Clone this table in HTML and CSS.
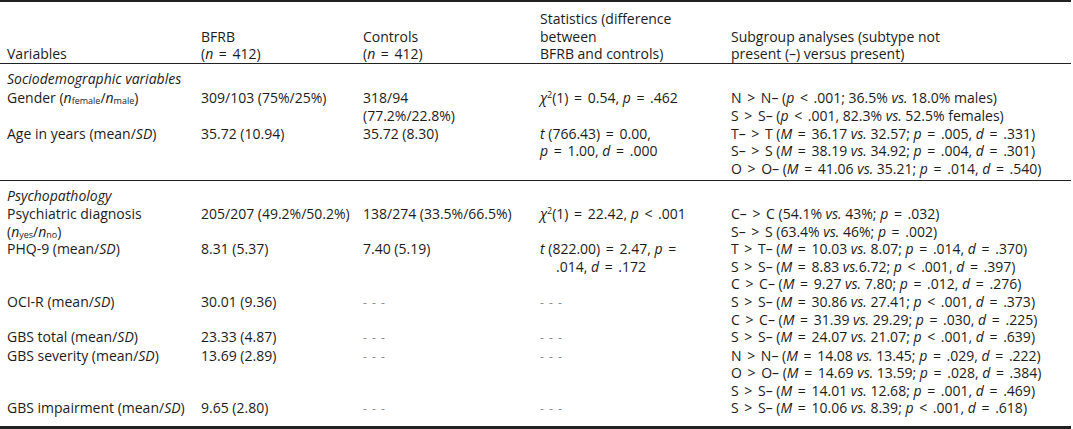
FILE: index.html
```html
<!DOCTYPE html>
<html lang="en">
<head>
<meta charset="utf-8">
<title>BFRB table</title>
<link rel="stylesheet" href="styles.css">
</head>
<body>
<div class="tbl">
  <div class="row head">
    <div class="cell">Variables</div>
    <div class="cell">BFRB<br>(<i>n</i> <span class="op">=</span> 412)</div>
    <div class="cell">Controls<br>(<i>n</i> <span class="op">=</span> 412)</div>
    <div class="cell">Statistics (difference<br>between<br>BFRB and controls)</div>
    <div class="cell">Subgroup analyses (subtype not<br>present (–) versus present)</div>
  </div>

  <div class="sec sec-a">
    <div class="sechead"><i>Sociodemographic variables</i></div>
    <div class="row first">
      <div class="cell">Gender (<i>n</i><sub>female</sub>/<i>n</i><sub>male</sub>)</div>
      <div class="cell">309/103 (75%/25%)</div>
      <div class="cell">318/94<br>(77.2%/22.8%)</div>
      <div class="cell"><i>χ</i><sup>2</sup>(1) <span class="op">=</span> 0.54, <i>p</i> <span class="op">=</span> .462</div>
      <div class="cell">N <span class="op">&gt;</span> N– (<i>p</i> <span class="op">&lt;</span> .001; 36.5% <i>vs.</i> 18.0% males)<br>S <span class="op">&gt;</span> S– (<i>p</i> <span class="op">&lt;</span> .001, 82.3% <i>vs.</i> 52.5% females)</div>
    </div>
    <div class="row">
      <div class="cell">Age in years (mean/<i>SD</i>)</div>
      <div class="cell">35.72 (10.94)</div>
      <div class="cell">35.72 (8.30)</div>
      <div class="cell"><i>t</i> (766.43) <span class="op">=</span> 0.00,<br><i>p</i> <span class="op">=</span> 1.00, <i>d</i> <span class="op">=</span> .000</div>
      <div class="cell">T– <span class="op">&gt;</span> T (<i>M</i> <span class="op">=</span> 36.17 <i>vs.</i> 32.57; <i>p</i> <span class="op">=</span> .005, <i>d</i> <span class="op">=</span> .331)<br>S– <span class="op">&gt;</span> S (<i>M</i> <span class="op">=</span> 38.19 <i>vs.</i> 34.92; <i>p</i> <span class="op">=</span> .004, <i>d</i> <span class="op">=</span> .301)<br>O <span class="op">&gt;</span> O– (<i>M</i> <span class="op">=</span> 41.06 <i>vs.</i> 35.21; <i>p</i> <span class="op">=</span> .014, <i>d</i> <span class="op">=</span> .540)</div>
    </div>
  </div>

  <div class="sec sec-b">
    <div class="sechead"><i>Psychopathology</i></div>
    <div class="row">
      <div class="cell">Psychiatric diagnosis<br>(<i>n</i><sub>yes</sub>/<i>n</i><sub>no</sub>)</div>
      <div class="cell">205/207 (49.2%/50.2%)</div>
      <div class="cell">138/274 (33.5%/66.5%)</div>
      <div class="cell"><i>χ</i><sup>2</sup>(1) <span class="op">=</span> 22.42, <i>p</i> <span class="op">&lt;</span> .001</div>
      <div class="cell">C– <span class="op">&gt;</span> C (54.1% <i>vs.</i> 43%; <i>p</i> <span class="op">=</span> .032)<br>S– <span class="op">&gt;</span> S (63.4% <i>vs.</i> 46%; <i>p</i> <span class="op">=</span> .002)</div>
    </div>
    <div class="row">
      <div class="cell">PHQ-9 (mean/<i>SD</i>)</div>
      <div class="cell">8.31 (5.37)</div>
      <div class="cell">7.40 (5.19)</div>
      <div class="cell"><i>t</i> (822.00) <span class="op">=</span> 2.47, <i>p</i> <span class="op">=</span><br><span class="indent">.014, <i>d</i> <span class="op">=</span> .172</span></div>
      <div class="cell">T <span class="op">&gt;</span> T– (<i>M</i> <span class="op">=</span> 10.03 <i>vs.</i> 8.07; <i>p</i> <span class="op">=</span> .014, <i>d</i> <span class="op">=</span> .370)<br>S <span class="op">&gt;</span> S– (<i>M</i> <span class="op">=</span> 8.83 <i>vs.</i>6.72; <i>p</i> <span class="op">&lt;</span> .001, <i>d</i> <span class="op">=</span> .397)<br>C <span class="op">&gt;</span> C– (<i>M</i> <span class="op">=</span> 9.27 <i>vs.</i> 7.80; <i>p</i> <span class="op">=</span> .012, <i>d</i> <span class="op">=</span> .276)</div>
    </div>
    <div class="row">
      <div class="cell">OCI-R (mean/<i>SD</i>)</div>
      <div class="cell">30.01 (9.36)</div>
      <div class="cell"><span class="na">- - -</span></div>
      <div class="cell"><span class="na">- - -</span></div>
      <div class="cell">S <span class="op">&gt;</span> S– (<i>M</i> <span class="op">=</span> 30.86 <i>vs.</i> 27.41; <i>p</i> <span class="op">&lt;</span> .001, <i>d</i> <span class="op">=</span> .373)<br>C <span class="op">&gt;</span> C– (<i>M</i> <span class="op">=</span> 31.39 <i>vs.</i> 29.29; <i>p</i> <span class="op">=</span> .030, <i>d</i> <span class="op">=</span> .225)</div>
    </div>
    <div class="row">
      <div class="cell">GBS total (mean/<i>SD</i>)</div>
      <div class="cell">23.33 (4.87)</div>
      <div class="cell"><span class="na">- - -</span></div>
      <div class="cell"><span class="na">- - -</span></div>
      <div class="cell">S <span class="op">&gt;</span> S– (<i>M</i> <span class="op">=</span> 24.07 <i>vs.</i> 21.07; <i>p</i> <span class="op">&lt;</span> .001, <i>d</i> <span class="op">=</span> .639)</div>
    </div>
    <div class="row">
      <div class="cell">GBS severity (mean/<i>SD</i>)</div>
      <div class="cell">13.69 (2.89)</div>
      <div class="cell"><span class="na">- - -</span></div>
      <div class="cell"><span class="na">- - -</span></div>
      <div class="cell">N <span class="op">&gt;</span> N– (<i>M</i> <span class="op">=</span> 14.08 <i>vs.</i> 13.45; <i>p</i> <span class="op">=</span> .029, <i>d</i> <span class="op">=</span> .222)<br>O <span class="op">&gt;</span> O– (<i>M</i> <span class="op">=</span> 14.69 <i>vs.</i> 13.59; <i>p</i> <span class="op">=</span> .028, <i>d</i> <span class="op">=</span> .384)<br>S <span class="op">&gt;</span> S– (<i>M</i> <span class="op">=</span> 14.01 <i>vs.</i> 12.68; <i>p</i> <span class="op">=</span> .001, <i>d</i> <span class="op">=</span> .469)</div>
    </div>
    <div class="row">
      <div class="cell">GBS impairment (mean/<i>SD</i>)</div>
      <div class="cell">9.65 (2.80)</div>
      <div class="cell"><span class="na">- - -</span></div>
      <div class="cell"><span class="na">- - -</span></div>
      <div class="cell">S <span class="op">&gt;</span> S– (<i>M</i> <span class="op">=</span> 10.06 <i>vs.</i> 8.39; <i>p</i> <span class="op">&lt;</span> .001, <i>d</i> <span class="op">=</span> .618)</div>
    </div>
  </div>
</div>
</body>
</html>
```
FILE: styles.css
```css
html, body {
  margin: 0;
  padding: 0;
  background: #ffffff;
}
body {
  font-family: "Open Sans", "Noto Sans", sans-serif;
  font-size: 14px;
  line-height: 17.6px;
  color: #1c1c1c;
}
.tbl {
  width: 1071px;
  border-top: 2px solid #222222;
  border-bottom: 3px solid #222222;
}
.row {
  display: grid;
  grid-template-columns: 194px 162px 177px 191px 1fr;
}
.cell {
  padding-left: 7px;
  white-space: nowrap;
}
.head {
  align-items: end;
  padding-top: 8px;
  border-bottom: 1px solid #222222;
}
.sechead {
  padding: 6px 0 0 7px;
}
.first {
  padding-top: 2px;
}
.sec-a {
  padding-bottom: 3px;
  border-bottom: 1px solid #222222;
}
.sec-b {
  padding-bottom: 8px;
}
.op {
  padding: 0 2px;
}
sub, sup {
  font-size: 9px;
  line-height: 0;
  position: relative;
  vertical-align: baseline;
}
sub { top: 1px; }
sup { top: -5px; }
.indent {
  padding-left: 16px;
}
.na {
  color: #8a8a8a;
  font-size: 12px;
  letter-spacing: 1px;
}
```
